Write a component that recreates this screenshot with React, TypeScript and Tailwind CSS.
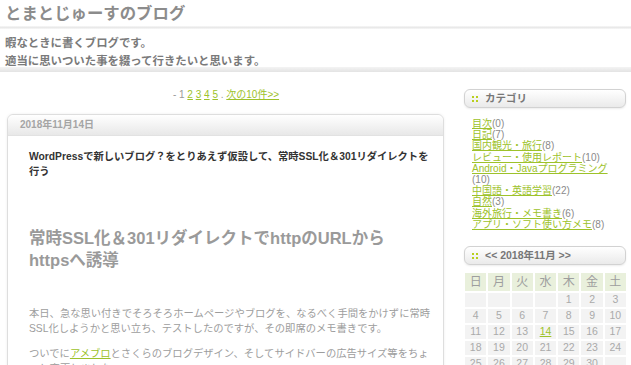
import React from "react";

function Dots() {
  return (
    <svg width="6" height="6" viewBox="0 0 6 6" className="shrink-0">
      <rect x="0" y="0" width="2" height="2" fill="#b9cf1e" />
      <rect x="4" y="0" width="2" height="2" fill="#b9cf1e" />
      <rect x="0" y="4" width="2" height="2" fill="#b9cf1e" />
      <rect x="4" y="4" width="2" height="2" fill="#b9cf1e" />
    </svg>
  );
}

function SideHead({ children }: { children: React.ReactNode }) {
  return (
    <div className="h-[19px] rounded-[6px] border border-[#d2d2d2] bg-gradient-to-b from-white to-[#eaeaea] shadow-[0_1px_2px_rgba(0,0,0,0.08)] flex items-center pl-[7px] gap-[7px] text-[10.5px] font-bold text-[#777]">
      <Dots />
      <span>{children}</span>
    </div>
  );
}

const cats: [string, string][] = [
  ["目次", "(0)"],
  ["日記", "(7)"],
  ["国内観光・旅行", "(8)"],
  ["レビュー・使用レポート", "(10)"],
  ["Android・Javaプログラミング", "(10)"],
  ["中国語・英語学習", "(22)"],
  ["自然", "(3)"],
  ["海外旅行・メモ書き", "(6)"],
  ["アプリ・ソフト使い方メモ", "(8)"],
];

const weeks: (number | null)[][] = [
  [null, null, null, null, 1, 2, 3],
  [4, 5, 6, 7, 8, 9, 10],
  [11, 12, 13, 14, 15, 16, 17],
  [18, 19, 20, 21, 22, 23, 24],
  [25, 26, 27, 28, 29, 30, null],
];

export default function App() {
  return (
    <div className="w-[631px] h-[365px] overflow-hidden bg-white font-['Liberation_Sans','Noto_Sans_CJK_JP',sans-serif]">
      <div className="h-[26px] pl-[5px] text-[16.4px] leading-[26px] font-bold text-[#8c8c8c]">
        とまとじゅーすのブログ
      </div>
      <div className="h-[3px] bg-gradient-to-b from-[#f7f7f7] via-[#e9e9e9] to-[#f7f7f7]" />
      <div className="h-[38px] pl-[5px] pt-[5px] text-[11.4px] leading-[18px] font-bold text-[#7a7a7a]">
        <p>暇なときに書くブログです。</p>
        <p>適当に思いついた事を綴って行きたいと思います。</p>
      </div>
      <div className="h-[5px] bg-gradient-to-b from-[#f4f4f4] to-[#e3e3e3]" />
      <div className="flex">
        <main className="w-[452px] shrink-0">
          <div className="mt-[16px] h-[14px] text-center text-[10px] leading-[14px] text-[#999] whitespace-nowrap">
            - 1{" "}
            <a className="text-[#9dc22a] underline">2</a>{" "}
            <a className="text-[#9dc22a] underline">3</a>{" "}
            <a className="text-[#9dc22a] underline">4</a>{" "}
            <a className="text-[#9dc22a] underline">5</a> .{" "}
            <a className="text-[#9dc22a] underline">次の10件&gt;&gt;</a>
          </div>
          <article className="mt-[12px] ml-[7px] w-[437px] h-[400px] rounded-[6px] border border-[#dedede] shadow-[0_0_3px_rgba(0,0,0,0.07)]">
            <div className="h-[21px] rounded-t-[6px] bg-gradient-to-b from-white to-[#e8e8e8] border-b border-[#e2e2e2] pl-[12px] text-[10px] leading-[20px] font-bold text-[#a5a5a5]">
              2018年11月14日
            </div>
            <div className="pl-[21px] pr-[6px]">
              <h2 className="mt-[13px] text-[10.3px] leading-[15px] font-bold text-[#333] whitespace-nowrap">
                WordPressで新しいブログ？をとりあえず仮設して、常時SSL化＆301リダイレクトを
                <br />
                行う
              </h2>
              <h3 className="mt-[48px] text-[16.5px] leading-[22px] font-bold text-[#9a9a9a] whitespace-nowrap">
                常時SSL化＆301リダイレクトでhttpのURLから
                <br />
                httpsへ誘導
              </h3>
              <p className="mt-[35px] text-[10.3px] leading-[15px] text-[#9d9d9d] whitespace-nowrap">
                本日、急な思い付きでそろそろホームページやブログを、なるべく手間をかけずに常時
                <br />
                SSL化しようかと思い立ち、テストしたのですが、その即席のメモ書きです。
              </p>
              <p className="mt-[10px] text-[10.3px] leading-[15px] text-[#9d9d9d] whitespace-nowrap">
                ついでに<a className="text-[#9dc22a] underline">アメブロ</a>とさくらのブログデザイン、そしてサイドバーの広告サイズ等をちょ
                <br />
                っと変更しました。
              </p>
            </div>
          </article>
        </main>
        <aside className="ml-[12px] w-[162px] shrink-0 mt-[17px]">
          <SideHead>カテゴリ</SideHead>
          <ul className="mt-[10px] pl-[8px] text-[10px] leading-[11.2px] text-[#8a8a8a] whitespace-nowrap">
            {cats.map(([name, count]) =>
              name.startsWith("Android") ? (
                <li key={name}>
                  <a className="text-[#9dc22a] underline">{name}</a>
                  <br />
                  {count}
                </li>
              ) : (
                <li key={name}>
                  <a className="text-[#9dc22a] underline">{name}</a>
                  {count}
                </li>
              )
            )}
          </ul>
          <div className="mt-[16px]">
            <SideHead>&lt;&lt; 2018年11月 &gt;&gt;</SideHead>
          </div>
          <div className="mt-[8px] ml-[1px] w-[161px] grid grid-cols-7 gap-[2px]">
            {["日", "月", "火", "水", "木", "金", "土"].map((d) => (
              <div key={d} className="h-[18px] bg-[#e9f0dc] flex items-center justify-center text-[12px] text-[#9e9e9e]">
                {d}
              </div>
            ))}
            {weeks.flat().map((n, i) => (
              <div key={i} className="h-[14px] bg-[#f3f3f3] flex items-center justify-center text-[10.5px] text-[#aaa]">
                {n === 14 ? (
                  <a className="text-[#9dc22a] underline">14</a>
                ) : (
                  n ?? ""
                )}
              </div>
            ))}
          </div>
        </aside>
      </div>
    </div>
  );
}
